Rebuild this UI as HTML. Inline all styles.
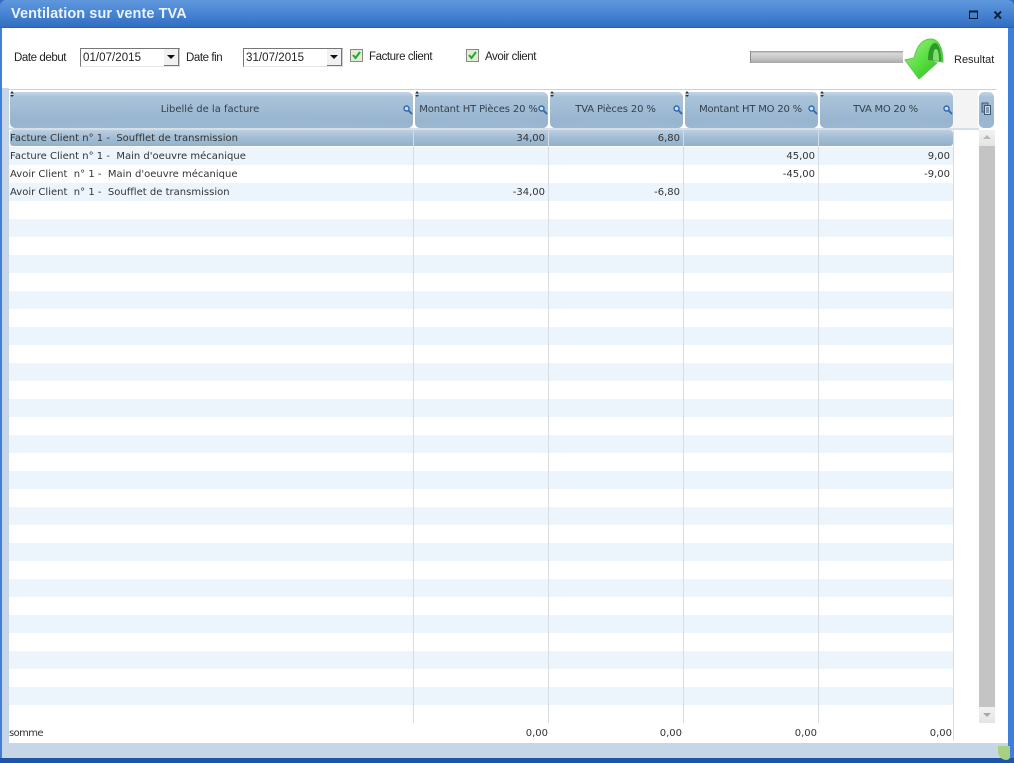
<!DOCTYPE html>
<html><head><meta charset="utf-8"><style>
html,body{margin:0;padding:0;width:1014px;height:763px;overflow:hidden;background:#fff}
body{position:relative;font-family:"Liberation Sans",sans-serif;color:#222}
div,span{position:absolute;white-space:pre}
svg{position:absolute}
.tb{background:linear-gradient(#5f97dc,#4a86d4 45%,#2f6cc0);}
.t{font-size:11.5px;letter-spacing:-.42px;line-height:14px;color:#222}
.g{font-family:"DejaVu Sans",sans-serif;font-size:10px;line-height:14px;color:#333}
.hd{top:92px;height:36px;border-radius:5px;background:radial-gradient(ellipse 70% 30% at 50% 100%,#9bb8d2 60%,transparent 100%),linear-gradient(#c4d5e5 0,#a9c3da 5px,#a3bed6 14px,#92afca 100%);}
.ht{top:103px;height:14px;text-align:center;font-family:"DejaVu Sans",sans-serif;font-size:10px;line-height:14px;color:#33404c}
.ln{width:1px;background:#d8dce0;top:129px;height:594px}
.r{text-align:right}
.row{left:9px;width:945px;height:18px;background:#ecf4fc}
</style></head><body>
<div style="left:0;top:0;width:1014px;height:763px;background:#2f6cc4"></div>
<div class="tb" style="left:0;top:0;width:1014px;height:28px;border-radius:6px 6px 0 0"></div>
<div style="left:0;top:27px;width:1014px;height:1px;background:#2a62b4"></div>
<div style="left:0;top:28px;width:4px;height:730px;background:#3f7fdc"></div>
<div style="left:1008px;top:28px;width:6px;height:730px;background:#3f7fdc"></div>
<div style="left:2px;top:28px;width:1006px;height:730px;background:#c6d6e7"></div>
<div style="left:2px;top:28px;width:1006px;height:60px;background:#fff"></div>
<div style="left:9px;top:88px;width:987px;height:655px;background:#fff"></div>
<div style="left:2px;top:88px;width:7px;height:655px;background:#c6d6e7"></div>
<div style="left:996px;top:88px;width:12px;height:655px;background:#fff"></div>
<div style="left:0;top:758px;width:1014px;height:5px;background:#1f55a8"></div>
<div style="left:998px;top:746px;width:12px;height:14px;background:#a9cf80;border-radius:0 0 4px 10px"></div>

<div style="left:11px;top:6px;font-size:14.5px;font-weight:bold;line-height:17px;color:#eaf3fd;letter-spacing:.08px">Ventilation sur vente TVA</div>
<svg style="left:968px;top:8px" width="36" height="14" viewBox="0 0 36 14"><rect x="1.500" y="3.500" width="8" height="7" fill="none" stroke="#0c1c33" stroke-width="1"/><path d="M1 3.500H10" stroke="#0c1c33" stroke-width="2"/><path d="M26.500 3.500L33 10.500M33 3.500L26.500 10.500" stroke="#0c1c33" stroke-width="2"/></svg>

<div class="t" style="left:14px;top:51px">Date debut</div>
<div style="left:80px;top:48px;width:98px;height:17px;border:1px solid #777;border-right-color:#ccc;border-bottom-color:#e5e5e5;background:#fff"></div>
<div class="t" style="left:83px;top:51px;letter-spacing:.05px">01/07/2015</div>
<div style="left:164px;top:49px;width:14px;height:16px;background:#f1f1f1;border-right:1px solid #777;border-bottom:1px solid #777"></div>
<svg style="left:167px;top:55px" width="9" height="5"><path d="M0 0H8L4 4Z" fill="#111"/></svg>
<div class="t" style="left:186px;top:51px">Date fin</div>
<div style="left:243px;top:48px;width:98px;height:17px;border:1px solid #777;border-right-color:#ccc;border-bottom-color:#e5e5e5;background:#fff"></div>
<div class="t" style="left:246px;top:51px;letter-spacing:.05px">31/07/2015</div>
<div style="left:327px;top:49px;width:14px;height:16px;background:#f1f1f1;border-right:1px solid #777;border-bottom:1px solid #777"></div>
<svg style="left:330px;top:55px" width="9" height="5"><path d="M0 0H8L4 4Z" fill="#111"/></svg>

<div style="left:350px;top:49px;width:11px;height:11px;border:1px solid #8a8a80;background:#e4ecd8"></div>
<svg style="left:351px;top:50px" width="11" height="11"><path d="M2 5L4.500 8L9 2" fill="none" stroke="#16b030" stroke-width="2"/></svg>
<div class="t" style="left:369px;top:50px">Facture client</div>
<div style="left:466px;top:49px;width:11px;height:11px;border:1px solid #8a8a80;background:#e4ecd8"></div>
<svg style="left:467px;top:50px" width="11" height="11"><path d="M2 5L4.500 8L9 2" fill="none" stroke="#16b030" stroke-width="2"/></svg>
<div class="t" style="left:485px;top:50px">Avoir client</div>

<div style="left:750px;top:51px;width:152px;height:12px;background:linear-gradient(#9a9a9a,#d8d8d8 20%,#c6c6c6 60%,#a8a8a8);border-left:1px solid #888"></div>
<svg style="left:903px;top:37px" width="44" height="44" viewBox="0 0 44 44">
<defs><linearGradient id="a" x1="0" y1="0" x2="1" y2="1"><stop offset="0" stop-color="#a8f08a"/><stop offset=".5" stop-color="#58e040"/><stop offset="1" stop-color="#2ab020"/></linearGradient></defs>
<path d="M40 25C40 10 35 2 28 2C20 2 14 8 11 21L2 23L16 42L34 26L25 23L40 25Z" fill="url(#a)" stroke="#62c452" stroke-width="1"/>
<path d="M25 23C25 11 29 6 32 6C36 6 38 14 38 24Z" fill="#2f9a2a"/>
<path d="M30 23C30 15 31 12 33 12C35 12 36 16 36 24Z" fill="#7fe070"/>
</svg>
<div class="t" style="left:954px;top:53px;font-size:11px;letter-spacing:0">Resultat</div>

<!-- grid -->
<div style="left:9px;top:89px;width:987px;height:1px;background:#c6d2de"></div>
<div style="left:9px;top:128px;width:970px;height:2px;background:#d6dfe8"></div>
<div style="left:953px;top:90px;width:25px;height:38px;background:#f4f4f4"></div>
<div class="row" style="top:147px"></div><div class="row" style="top:183px"></div><div class="row" style="top:219px"></div><div class="row" style="top:255px"></div><div class="row" style="top:291px"></div><div class="row" style="top:327px"></div><div class="row" style="top:363px"></div><div class="row" style="top:399px"></div><div class="row" style="top:435px"></div><div class="row" style="top:471px"></div><div class="row" style="top:507px"></div><div class="row" style="top:543px"></div><div class="row" style="top:579px"></div><div class="row" style="top:615px"></div><div class="row" style="top:651px"></div><div class="row" style="top:687px"></div>
<div style="left:10px;top:130px;width:943px;height:16px;border-radius:3px;background:linear-gradient(#bccfe0,#a3bed6 45%,#93b0cb)"></div>

<div class="ln" style="left:413px"></div><div class="ln" style="left:548px"></div><div class="ln" style="left:683px"></div><div class="ln" style="left:818px"></div>

<div class="hd" style="left:10px;width:403px"></div>
<div class="hd" style="left:415px;width:133px"></div>
<div class="hd" style="left:550px;width:133px"></div>
<div class="hd" style="left:685px;width:133px"></div>
<div class="hd" style="left:820px;width:133px"></div>
<div class="hd" style="left:979px;width:15px;top:92px"></div>
<svg style="left:981px;top:102px" width="11" height="14" viewBox="0 0 11 14"><rect x="1" y="1" width="6" height="9" fill="#8ea4bc" stroke="#3f5874"/><rect x="3.500" y="3.500" width="6" height="9" fill="#cfdbe8" stroke="#3f5874"/><path d="M5 6H8M5 8H8M5 10H8" stroke="#3f5874"/></svg>

<div class="ht" style="left:10px;width:400px;letter-spacing:-.02px">Libellé de la facture</div>
<div class="ht" style="left:416px;width:125px;letter-spacing:-.14px">Montant HT Pièces 20 %</div>
<div class="ht" style="left:550px;width:131px;letter-spacing:-.14px">TVA Pièces 20 %</div>
<div class="ht" style="left:685px;width:131px;letter-spacing:-.2px">Montant HT MO 20 %</div>
<div class="ht" style="left:820px;width:131px;letter-spacing:-.25px">TVA MO 20 %</div>

<svg style="left:0;top:0" width="1014" height="130"><defs><g id="m"><circle cx="3.500" cy="3.500" r="2.500" fill="#cfe0f2" stroke="#2f68b0" stroke-width="1.400"/><path d="M5.500 5.500L9 9" stroke="#2f68b0" stroke-width="1.800"/></g><g id="s"><path d="M0 2.500L2 0L4 2.500ZM0 4H4L2 6Z" fill="#333"/></g></defs>
<use href="#m" x="403" y="105"/><use href="#m" x="538" y="105"/><use href="#m" x="673" y="105"/><use href="#m" x="808" y="105"/><use href="#m" x="943" y="105"/>
<use href="#s" x="10" y="91"/><use href="#s" x="415" y="91"/><use href="#s" x="550" y="91"/><use href="#s" x="685" y="91"/><use href="#s" x="820" y="91"/>
</svg>

<div class="g" style="left:10px;top:132px;letter-spacing:.01px">Facture Client n° 1 -  Soufflet de transmission</div>
<div class="g" style="left:10px;top:150px;letter-spacing:.01px">Facture Client n° 1 -  Main d'oeuvre mécanique</div>
<div class="g" style="left:10px;top:168px;letter-spacing:.01px">Avoir Client  n° 1 -  Main d'oeuvre mécanique</div>
<div class="g" style="left:10px;top:186px;letter-spacing:.01px">Avoir Client  n° 1 -  Soufflet de transmission</div>
<div class="g r" style="left:445px;width:100px;top:132px">34,00</div>
<div class="g r" style="left:580px;width:100px;top:132px">6,80</div>
<div class="g r" style="left:715px;width:100px;top:150px">45,00</div>
<div class="g r" style="left:850px;width:100px;top:150px">9,00</div>
<div class="g r" style="left:715px;width:100px;top:168px">-45,00</div>
<div class="g r" style="left:850px;width:100px;top:168px">-9,00</div>
<div class="g r" style="left:445px;width:100px;top:186px">-34,00</div>
<div class="g r" style="left:580px;width:100px;top:186px">-6,80</div>

<div class="g" style="left:9px;top:727px;letter-spacing:-.6px">somme</div>
<div class="g r" style="left:448px;width:100px;top:727px">0,00</div>
<div class="g r" style="left:582px;width:100px;top:727px">0,00</div>
<div class="g r" style="left:717px;width:100px;top:727px">0,00</div>
<div class="g r" style="left:852px;width:100px;top:727px">0,00</div>
<div style="left:953px;top:129px;width:1px;height:612px;background:#d8dce0"></div>

<!-- scrollbar -->
<div style="left:979px;top:130px;width:16px;height:593px;background:#c4c4c4"></div>
<div style="left:979px;top:130px;width:16px;height:16px;background:linear-gradient(#f2f2f2,#e4e4e4)"></div>
<div style="left:979px;top:707px;width:16px;height:16px;background:linear-gradient(#f2f2f2,#e4e4e4)"></div>
<svg style="left:983px;top:135px" width="8" height="5"><path d="M0 4H8L4 0Z" fill="#b8b8b8"/></svg>
<svg style="left:983px;top:713px" width="8" height="5"><path d="M0 0H8L4 4Z" fill="#a8a8a8"/></svg>
</body></html>
